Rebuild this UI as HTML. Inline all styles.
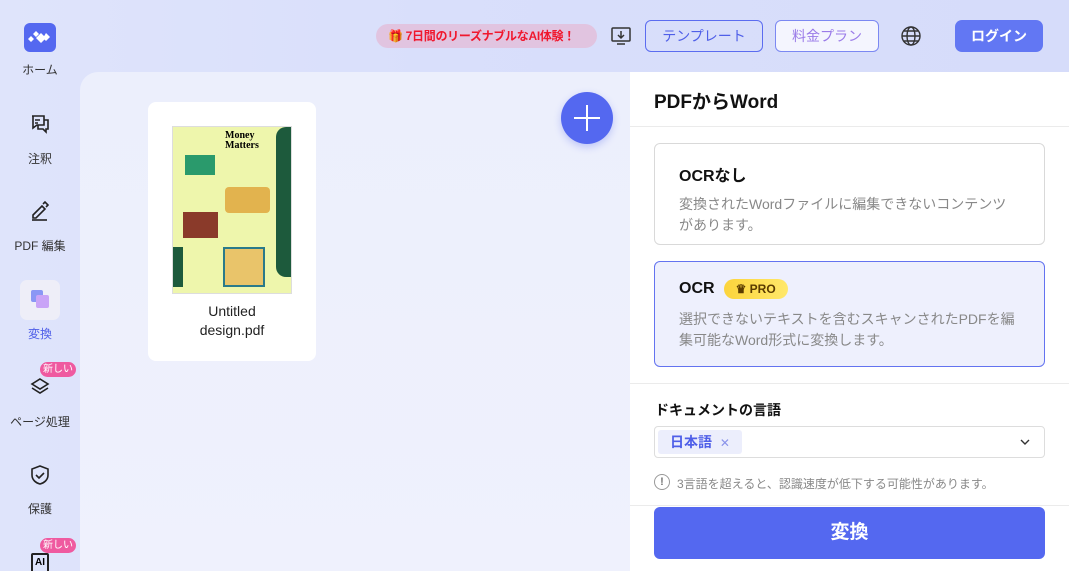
<!DOCTYPE html><html><head><meta charset="utf-8"><style>
*{box-sizing:border-box;margin:0;padding:0}
html,body{width:1069px;height:571px;overflow:hidden}
body{font-family:"Liberation Sans","Noto Sans CJK JP",sans-serif;background:linear-gradient(90deg,#dfe4fb 0%,#d9dffb 40%,#d6dcfa 100%);position:relative}
.abs{position:absolute}
.nav{position:absolute;left:0;width:80px;text-align:center;font-size:12px;color:#333}
.main{left:80px;top:72px;width:560px;height:499px;background:linear-gradient(180deg,#eceffc,#eff1fd);border-top-left-radius:18px}
.panel{left:630px;top:72px;width:439px;height:499px;background:#fff}
.btn{position:absolute;top:20px;height:32px;border:1px solid #5b6cf0;border-radius:6px;font-size:14px;color:#4f5fe8;text-align:center;line-height:30px}
.card{position:absolute;left:654px;width:391px;border-radius:6px;padding:0 24px}
.t{font-size:16px;font-weight:bold;color:#111}
.d{font-size:14px;color:#888;line-height:21px}
</style></head><body>
<div class="abs main"></div>
<div class="abs panel"></div>

<!-- sidebar -->
<div class="abs" style="left:24px;top:23px;width:32px;height:29px;background:#5468f0;border-radius:6px"></div>
<svg class="abs" style="left:28px;top:29px" width="24" height="17" viewBox="0 0 24 17" fill="#fff"><path d="M8 2l3 3-3 3-3-3zM3 7l3 3-3 3-3-3zM13 4l5 5-5 5-5-5zM18 4l4 4-4 4-3-3z"/></svg>
<div class="nav" style="top:61px">ホーム</div>
<svg class="abs" style="left:29px;top:113px" width="22" height="22" viewBox="0 0 22 22" fill="none" stroke="#222" stroke-width="1.6"><path d="M3 3h12v9H8l-4 3V3zM15 7h4v9h-2v3l-3-3H9v-4"/><path d="M6 7h5M6 10h3"/></svg>
<div class="nav" style="top:150px">注釈</div>
<svg class="abs" style="left:29px;top:200px" width="22" height="22" viewBox="0 0 22 22" fill="none" stroke="#222" stroke-width="1.6"><path d="M4 15l9-9 3 3-9 9H4z"/><path d="M3 20h15"/><path d="M14 4l2-2 3 3-2 2"/></svg>
<div class="nav" style="top:237px">PDF 編集</div>
<div class="abs" style="left:20px;top:280px;width:40px;height:40px;background:#eeeef8;border-radius:7px"></div>
<div class="abs" style="left:31px;top:290px;width:12px;height:12px;background:#8a97f5;border-radius:2px"></div>
<div class="abs" style="left:36px;top:295px;width:13px;height:13px;background:#c9a4f7;border-radius:2px"></div>
<div class="nav" style="top:325px;color:#4f5fe8">変換</div>
<div class="abs" style="left:40px;top:362px;width:36px;height:15px;background:#ef5aa0;border-radius:8px;color:#fff;font-size:10px;text-align:center;line-height:15px">新しい</div>
<svg class="abs" style="left:29px;top:376px" width="22" height="22" viewBox="0 0 22 22" fill="none" stroke="#222" stroke-width="1.6"><path d="M11 3l8 5-8 5-8-5z"/><path d="M3 12l8 5 8-5"/></svg>
<div class="nav" style="top:413px">ページ処理</div>
<svg class="abs" style="left:29px;top:464px" width="22" height="22" viewBox="0 0 22 22" fill="none" stroke="#222" stroke-width="1.6"><path d="M11 2l8 3v6c0 5-4 8-8 9-4-1-8-4-8-9V5z"/><path d="M7 11l3 3 5-5"/></svg>
<div class="nav" style="top:500px">保護</div>
<div class="abs" style="left:40px;top:538px;width:36px;height:15px;background:#ef5aa0;border-radius:8px;color:#fff;font-size:10px;text-align:center;line-height:15px">新しい</div>
<div class="abs" style="left:31px;top:553px;width:18px;height:20px;border:2px solid #222;border-radius:2px;font-size:10px;font-weight:bold;line-height:16px;text-align:center">AI</div>

<!-- top bar -->
<div class="abs" style="left:376px;top:24px;width:221px;height:24px;background:#e1c4e0;border-radius:12px;color:#f0182e;font-size:12px;font-weight:bold;line-height:24px;padding-left:12px;white-space:nowrap;overflow:hidden;letter-spacing:-0.3px">🎁 7日間のリーズナブルなAI体験！</div>
<svg class="abs" style="left:610px;top:25px" width="22" height="22" viewBox="0 0 22 22" fill="none" stroke="#333" stroke-width="1.5"><rect x="2" y="3" width="18" height="13" rx="1"/><path d="M11 6v7M8 10l3 3 3-3M7 19h8"/></svg>
<div class="btn" style="left:645px;width:118px">テンプレート</div>
<div class="btn" style="left:775px;width:104px;background:#f4f5fe;border-color:#7b88f2;color:#9a7be8">料金プラン</div>
<svg class="abs" style="left:900px;top:25px" width="22" height="22" viewBox="0 0 22 22" fill="none" stroke="#333" stroke-width="1.4"><circle cx="11" cy="11" r="9"/><ellipse cx="11" cy="11" rx="4" ry="9"/><path d="M2 11h18M4 6h14M4 16h14"/></svg>
<div class="abs" style="left:955px;top:20px;width:88px;height:32px;background:#6277f3;border-radius:7px;color:#fff;font-size:14px;font-weight:bold;text-align:center;line-height:32px">ログイン</div>

<!-- file card -->
<div class="abs" style="left:148px;top:102px;width:168px;height:259px;background:#fff;border-radius:8px"></div>
<div class="abs" style="left:172px;top:126px;width:120px;height:168px;background:#eef6ac;border:1px solid #ddd;overflow:hidden">
<div class="abs" style="left:52px;top:4px;font-size:10px;font-weight:bold;font-family:'Liberation Serif',serif;line-height:10px">Money<br>Matters</div>
<div class="abs" style="left:103px;top:0;width:20px;height:150px;background:#1d5a3c;border-radius:10px 0 0 10px"></div>
<div class="abs" style="left:12px;top:28px;width:30px;height:20px;background:#2a9a6c"></div>
<div class="abs" style="left:52px;top:60px;width:45px;height:26px;background:#e2b34e;border-radius:4px"></div>
<div class="abs" style="left:10px;top:85px;width:35px;height:26px;background:#8a3a2a"></div>
<div class="abs" style="left:50px;top:120px;width:42px;height:40px;background:#e9c46a;border:2px solid #2a7a8a"></div>
<div class="abs" style="left:0;top:120px;width:10px;height:40px;background:#1d5a3c"></div>
</div>
<div class="abs" style="left:148px;top:302px;width:168px;text-align:center;font-size:14px;color:#222;line-height:19px">Untitled<br>design.pdf</div>

<!-- plus -->
<div class="abs" style="left:561px;top:92px;width:52px;height:52px;border-radius:50%;background:#5468f0;box-shadow:0 3px 8px rgba(80,100,240,.3)"></div>
<div class="abs" style="left:574px;top:117px;width:26px;height:2px;background:#fff"></div>
<div class="abs" style="left:586px;top:105px;width:2px;height:26px;background:#fff"></div>

<!-- panel -->
<div class="abs" style="left:654px;top:87px;font-size:19px;font-weight:bold;color:#111">PDFからWord</div>
<div class="abs" style="left:630px;top:126px;width:439px;height:1px;background:#ebebeb"></div>
<div class="card" style="top:143px;height:102px;border:1px solid #d9d9d9;padding-top:18px">
<div class="t">OCRなし</div><div class="d" style="margin-top:8px">変換されたWordファイルに編集できないコンテンツがあります。</div></div>
<div class="card" style="top:261px;height:106px;border:1px solid #6373f0;background:#eef0fd;padding-top:17px">
<div class="t" style="display:flex;align-items:center">OCR<span style="margin-left:9px;background:linear-gradient(90deg,#fcd43c,#ffe86a);border-radius:12px;font-size:12px;padding:3px 12px;color:#5a3b00">♛ PRO</span></div>
<div class="d" style="margin-top:10px">選択できないテキストを含むスキャンされたPDFを編集可能なWord形式に変換します。</div></div>
<div class="abs" style="left:630px;top:383px;width:439px;height:1px;background:#ebebeb"></div>
<div class="abs" style="left:655px;top:400px;font-size:14px;font-weight:bold;color:#111">ドキュメントの言語</div>
<div class="abs" style="left:654px;top:426px;width:391px;height:32px;border:1px solid #ddd;border-radius:4px"></div>
<div class="abs" style="left:658px;top:430px;width:84px;height:24px;background:#eceefc;border-radius:3px;color:#4f5fe8;font-size:14px;font-weight:bold;line-height:24px;padding-left:12px">日本語 <span style="font-weight:normal;color:#8a93ea;font-size:12px;margin-left:4px">✕</span></div>
<svg class="abs" style="left:1019px;top:436px" width="12" height="12" viewBox="0 0 12 12" fill="none" stroke="#333" stroke-width="1.4"><path d="M2 4l4 4 4-4"/></svg>
<div class="abs" style="left:654px;top:474px;width:16px;height:16px;border:1px solid #999;border-radius:50%;font-size:11px;color:#777;text-align:center;line-height:14px;font-weight:bold">!</div>
<div class="abs" style="left:677px;top:475px;font-size:12px;color:#888">3言語を超えると、認識速度が低下する可能性があります。</div>
<div class="abs" style="left:630px;top:505px;width:439px;height:1px;background:#ebebeb"></div>
<div class="abs" style="left:654px;top:507px;width:391px;height:52px;background:#5468f0;border-radius:6px;color:#fff;font-size:19px;font-weight:bold;text-align:center;line-height:52px">変換</div>
</body></html>
